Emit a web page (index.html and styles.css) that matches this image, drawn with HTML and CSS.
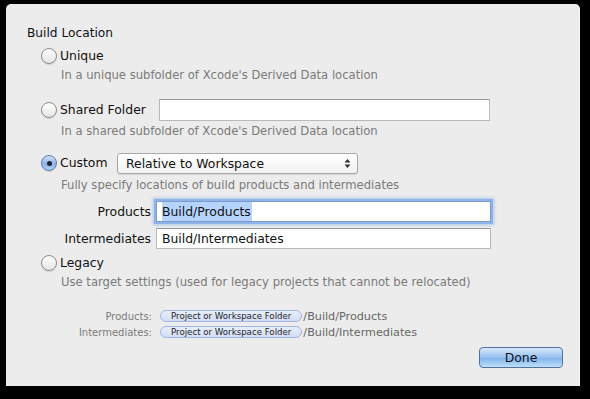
FILE: index.html
```html
<!DOCTYPE html>
<html>
<head>
	<title>Build Location</title>
	<link rel="stylesheet" href="styles.css">
</head>
<body>
	<div class="sheet">
		<div class="title">Build Location</div>

		<div class="option row-unique">
			<span class="radio"></span><span class="label">Unique</span>
		</div>
		<div class="hint hint-unique">In a unique subfolder of Xcode's Derived Data location</div>

		<div class="option row-shared">
			<span class="radio"></span><span class="label">Shared Folder</span>
			<span class="field field-shared"></span>
		</div>
		<div class="hint hint-shared">In a shared subfolder of Xcode's Derived Data location</div>

		<div class="option row-custom">
			<span class="radio checked"></span><span class="label">Custom</span>
			<span class="popup">Relative to Workspace
				<svg class="arrows" width="7" height="11" viewBox="0 0 7 11"><path d="M3.5 1 L6.5 4.5 L0.5 4.5 Z M3.5 10 L6.5 6.5 L0.5 6.5 Z" fill="#333"/></svg>
			</span>
		</div>
		<div class="hint hint-custom">Fully specify locations of build products and intermediates</div>

		<div class="pathrow row-products">
			<span class="pathlabel">Products</span>
			<span class="field field-path focused"><span class="sel">Build/Products</span></span>
		</div>
		<div class="pathrow row-inter">
			<span class="pathlabel">Intermediates</span>
			<span class="field field-path">Build/Intermediates</span>
		</div>

		<div class="option row-legacy">
			<span class="radio"></span><span class="label">Legacy</span>
		</div>
		<div class="hint hint-legacy">Use target settings (used for legacy projects that cannot be relocated)</div>

		<div class="preview">
			<div class="prow">
				<span class="plabel">Products:</span>
				<span class="pill">Project or Workspace Folder</span><span class="ptail">/Build/Products</span>
			</div>
			<div class="prow">
				<span class="plabel">Intermediates:</span>
				<span class="pill">Project or Workspace Folder</span><span class="ptail">/Build/Intermediates</span>
			</div>
		</div>

		<div class="buttons">
			<span class="done">Done</span>
		</div>
	</div>
</body>
</html>
```

FILE: styles.css
```css
html,body{
	margin:0;
	padding:0;
	background:#000;
}
body{
	width:590px;
	height:399px;
	overflow:hidden;
	font-family:"DejaVu Sans","Noto Sans",sans-serif;
	color:#111;
}
.sheet{
	margin:4px 0 0 6px;
	width:574px;
	height:382px;
	box-sizing:border-box;
	padding:22px 0 0 21px;
	background:#ececec;
	border-radius:5px 5px 0 0;
	border-right:1px solid #f6f6f6;
}
.title{
	font-size:12.2px;
	line-height:14px;
	height:14px;
}
.option{
	display:flex;
	align-items:center;
	margin-left:14px;
	font-size:12.4px;
}
.row-unique{ margin-top:6px; height:20px; }
.row-shared{ margin-top:16px; height:22px; }
.row-custom{ margin-top:13px; height:22px; }
.row-legacy{ margin-top:5px; height:18px; }
.radio{
	width:16px;
	height:16px;
	box-sizing:border-box;
	border-radius:50%;
	border:1px solid #8c8c8c;
	background:linear-gradient(#ffffff,#e4e4e4);
	box-shadow:0 1px 1px rgba(0,0,0,0.12);
	margin-right:3px;
	position:relative;
}
.radio.checked{
	border-color:#5a7cb4;
	background:linear-gradient(#d2e1f7,#8fb2e6 55%,#b4cff2);
}
.radio.checked:after{
	content:"";
	position:absolute;
	left:4.5px;
	top:4.5px;
	width:5px;
	height:5px;
	border-radius:50%;
	background:#1d2740;
}
.label{
	line-height:16px;
}
.hint{
	margin-left:34px;
	font-size:11.6px;
	line-height:16px;
	height:16px;
	color:#7a7a7a;
}
.hint-unique{ margin-top:1px; }
.hint-shared{ margin-top:2px; }
.hint-custom{ margin-top:3px; }
.hint-legacy{ margin-top:2px; }
.field{
	display:block;
	box-sizing:border-box;
	background:#fff;
	border:1px solid #b9b9b9;
	border-top-color:#9a9a9a;
	height:22px;
}
.field-shared{
	margin-left:auto;
	margin-right:89px;
	width:331px;
}
.popup{
	margin-left:auto;
	margin-right:221px;
	width:241px;
	height:21px;
	box-sizing:border-box;
	border:1px solid #a8a8a8;
	border-radius:3px;
	background:linear-gradient(#ffffff,#f1f1f1);
	box-shadow:0 1px 1px rgba(0,0,0,0.1);
	display:flex;
	align-items:center;
	padding-left:8px;
	position:relative;
	font-size:12.4px;
}
.arrows{
	position:absolute;
	right:6px;
	top:4px;
}
.pathrow{
	display:flex;
	align-items:center;
	font-size:12.4px;
}
.row-products{ margin-top:7px; height:22px; }
.row-inter{ margin-top:5px; height:22px; }
.pathlabel{
	width:124px;
	text-align:right;
	margin-right:5px;
}
.field-path{
	width:335px;
	height:21px;
	line-height:19px;
	padding-left:5px;
}
.focused{
	border-color:#7e9bc9;
	box-shadow:0 0 0 2px #8db3ea,0 0 3px 3px rgba(110,160,230,0.5);
}
.sel{
	background:#b5d3fb;
	padding:2px 1px 2px 0;
}
.preview{
	margin-top:19px;
	font-size:10px;
	color:#7a7a7a;
}
.prow{
	display:flex;
	align-items:center;
	height:14px;
	margin-bottom:2px;
}
.prow + .prow{
	margin-top:1px;
}
.plabel{
	width:125px;
	text-align:right;
	margin-right:8px;
}
.pill{
	height:12px;
	line-height:11px;
	box-sizing:border-box;
	padding:0 10px;
	border:1px solid #a3b6df;
	border-radius:6px;
	background:linear-gradient(#e7edfb,#d3def6);
	color:#1e1e1e;
	font-size:8.65px;
}
.ptail{
	margin-left:1px;
	font-size:11.2px;
	color:#666;
}
.buttons{
	display:flex;
	justify-content:flex-end;
	margin-top:8px;
	padding-right:16px;
}
.done{
	width:84px;
	height:21px;
	box-sizing:border-box;
	border:1px solid #54709f;
	border-radius:4px;
	background:linear-gradient(#d8e8fb,#98c1ef 50%,#7fb1ec 51%,#bde0fb);
	text-align:center;
	line-height:19px;
	font-size:12.4px;
}
```
